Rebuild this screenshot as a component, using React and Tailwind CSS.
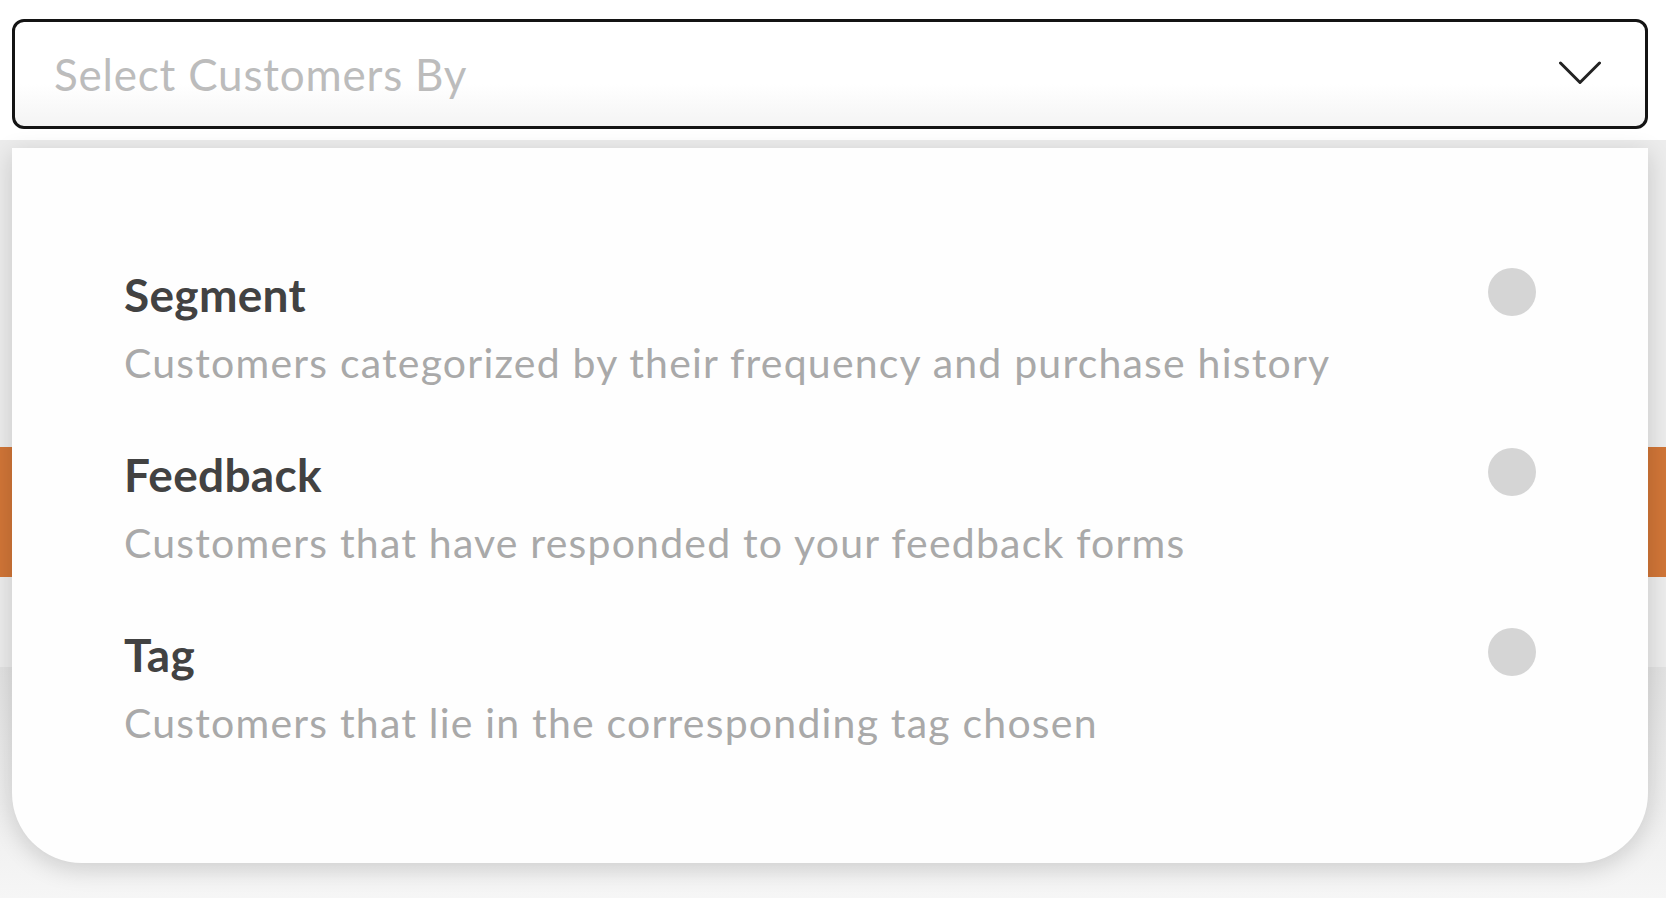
const OPTIONS = [
  { title: "Segment", desc: "Customers categorized by their frequency and purchase history" },
  { title: "Feedback", desc: "Customers that have responded to your feedback forms" },
  { title: "Tag", desc: "Customers that lie in the corresponding tag chosen" },
];

export default function App() {
  return (
    <div className="relative h-[898px] w-full overflow-hidden bg-white font-['Lato','Liberation_Sans',sans-serif]">
      {/* Select trigger */}
      <div className="pl-[12px] pr-[18px] pt-[19px]">
        <button className="flex h-[110px] w-full items-center justify-between rounded-[12px] border-[3px] border-[#141414] bg-gradient-to-b from-white from-60% to-[#f4f4f4] pl-[39px] pr-[44px]">
          <span className="text-[44px] leading-[53px] tracking-[0.8px] text-[#bcbcbc]">Select Customers By</span>
          <svg width="42" height="24" viewBox="0 0 42 24" fill="none" className="-mt-[2px]">
            <polyline points="1.5,2 21,21.5 40.5,2" stroke="#222" strokeWidth="3" strokeLinecap="round" strokeLinejoin="round" />
          </svg>
        </button>
      </div>

      {/* Page behind the menu */}
      <div className="mt-[11px] flex flex-col">
        <div className="h-[307px] bg-[#ececec]" />
        <div className="h-[130px] bg-[#d07537]" />
        <div className="h-[90px] bg-[#ececec]" />
        <div className="h-[231px] bg-gradient-to-b from-[#e2e2e2] to-[#f6f6f6]" />
      </div>

      {/* Dropdown menu */}
      <div className="absolute left-[12px] right-[18px] top-[148px] h-[715px] rounded-b-[70px] bg-[#fefefe] px-[112px] pt-[119px] shadow-[0_6px_24px_rgba(0,0,0,0.16)]">
        <div className="flex flex-col gap-[60px]">
          {OPTIONS.map((o) => (
            <div key={o.title} className="flex items-start justify-between">
              <div className="flex flex-col gap-[16px]">
                <span className="text-[46px] font-bold leading-[56px] tracking-[0.3px] text-[#424242]">{o.title}</span>
                <span className="text-[41px] leading-[48px] tracking-[1.2px] text-[#a9a9a9]">{o.desc}</span>
              </div>
              <span className="mt-[1px] h-[48px] w-[48px] shrink-0 rounded-full bg-[#d5d5d5]" />
            </div>
          ))}
        </div>
      </div>
    </div>
  );
}
